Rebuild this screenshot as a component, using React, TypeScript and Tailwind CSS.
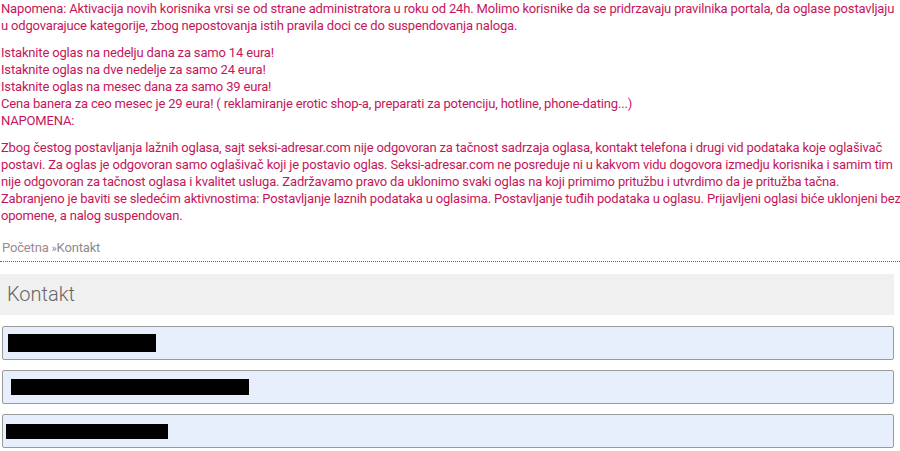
import React from 'react';

const pink = 'text-[#c5165a]';

export default function App() {
  return (
    <div className="w-[900px] h-[451px] overflow-hidden bg-white font-['Roboto',sans-serif] text-[13px] leading-[17px]">
      <div className={`${pink} whitespace-nowrap pl-px tracking-[-0.17px]`}>
        <p>
          Napomena: Aktivacija novih korisnika vrsi se od strane administratora u roku od 24h. Molimo korisnike da se pridrzavaju pravilnika portala, da oglase postavljaju
          <br />
          u odgovarajuce kategorije, zbog nepostovanja istih pravila doci ce do suspendovanja naloga.
        </p>

        <p className="mt-[10px]">
          Istaknite oglas na nedelju dana za samo 14 eura!
          <br />
          Istaknite oglas na dve nedelje za samo 24 eura!
          <br />
          Istaknite oglas na mesec dana za samo 39 eura!
          <br />
          Cena banera za ceo mesec je 29 eura! ( reklamiranje erotic shop-a, preparati za potenciju, hotline, phone-dating...)
          <br />
          NAPOMENA:
        </p>

        <p className="mt-[10px]">
          Zbog čestog postavljanja lažnih oglasa, sajt seksi-adresar.com nije odgovoran za tačnost sadrzaja oglasa, kontakt telefona i drugi vid podataka koje oglašivač
          <br />
          postavi. Za oglas je odgovoran samo oglašivač koji je postavio oglas. Seksi-adresar.com ne posreduje ni u kakvom vidu dogovora izmedju korisnika i samim tim
          <br />
          nije odgovoran za tačnost oglasa i kvalitet usluga. Zadržavamo pravo da uklonimo svaki oglas na koji primimo pritužbu i utvrdimo da je pritužba tačna.
          <br />
          Zabranjeno je baviti se sledećim aktivnostima: Postavljanje laznih podataka u oglasima. Postavljanje tuđih podataka u oglasu. Prijavljeni oglasi biće uklonjeni bez
          <br />
          opomene, a nalog suspendovan.
        </p>
      </div>

      <div className="mt-[15px] pl-[2px] pb-[4px] border-b border-dotted border-[#7a5a64] text-[13px] text-[#8c8c8c] tracking-[-0.17px]">
        <a className="text-[#a08890]">Početna</a> <span className="text-[11px]">»</span>Kontakt
      </div>

      <div className="mt-[12px] mr-[6px] h-[41px] bg-[#f0f0f0] flex items-center pl-[7px]">
        <h1 className="text-[20px] font-light text-[#666]">Kontakt</h1>
      </div>

      <form className="mt-[11px] mr-[6px] ml-[2px] flex flex-col gap-[10px]">
        <Field barW="w-[148px]" barH="h-[18px]" barX="ml-[5px]" />
        <Field barW="w-[238px]" barH="h-[16px]" barX="ml-[8px]" />
        <Field barW="w-[162px]" barH="h-[15px]" barX="ml-[3px]" />
      </form>
    </div>
  );
}

function Field({ barW, barH, barX }: { barW: string; barH: string; barX: string }) {
  return (
    <div className="h-[34px] bg-[#e8effc] border border-[#9a9a9a] rounded-[2px] flex items-center">
      <div className={`${barX} ${barW} ${barH} bg-black`} />
    </div>
  );
}
